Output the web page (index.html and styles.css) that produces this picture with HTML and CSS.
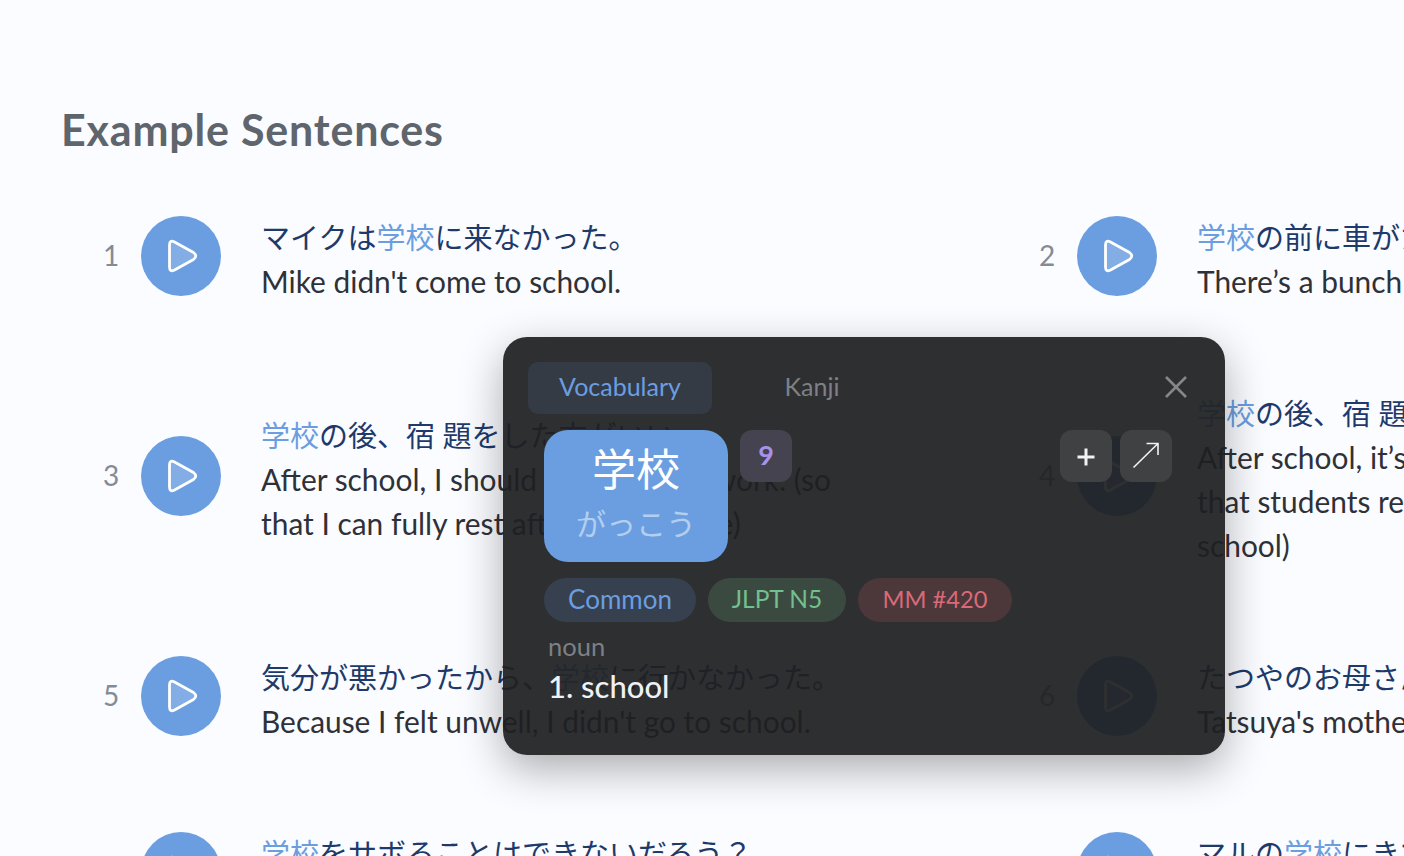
FILE: index.html
```html
<!DOCTYPE html>
<html lang="en">
<head>
    <meta charset="UTF-8">
    <meta name="viewport" content="width=device-width, initial-scale=1.0">
    <title>Example Sentences</title>
    <link rel="stylesheet" href="styles.css">
</head>
<body>
    <svg class="defs" width="0" height="0">
        <symbol id="play" viewBox="0 0 80 80">
            <path d="M28.500 29q0-5.500 5-3l19 10.500q4.500 3.500 0 7l-19 10.500q-5 2.500-5-3z" fill="rgba(255,255,255,.16)" stroke="#fff" stroke-width="2.800" stroke-linejoin="round"/>
        </symbol>
    </svg>

    <section class="sentences">
        <h2>Example Sentences</h2>
        <div class="sentence-grid">
            <div class="sentence">
                <span class="num">1</span>
                <button class="play"><svg><use href="#play"/></svg></button>
                <div class="text">
                    <p class="ja">マイクは<em>学校</em>に来なかった。</p>
                    <p class="en">Mike didn't come to school.</p>
                </div>
            </div>
            <div class="sentence">
                <span class="num">2</span>
                <button class="play"><svg><use href="#play"/></svg></button>
                <div class="text">
                    <p class="ja"><em>学校</em>の前に車がたくさんあります。</p>
                    <p class="en">There’s a bunch of cars in front of the school.</p>
                </div>
            </div>
            <div class="sentence">
                <span class="num">3</span>
                <button class="play"><svg><use href="#play"/></svg></button>
                <div class="text">
                    <p class="ja"><em>学校</em>の後、宿 題をした方がいい。</p>
                    <p class="en">After school, I should tackle all my work. (so that I can fully rest after that at ease)</p>
                </div>
            </div>
            <div class="sentence">
                <span class="num">4</span>
                <button class="play"><svg><use href="#play"/></svg></button>
                <div class="text">
                    <p class="ja"><em>学校</em>の後、宿 題をするのは大事です。</p>
                    <p class="en">After school, it’s good to do homework so that students review what they learned at school)</p>
                </div>
            </div>
            <div class="sentence">
                <span class="num">5</span>
                <button class="play"><svg><use href="#play"/></svg></button>
                <div class="text">
                    <p class="ja">気分が悪かったから、<em>学校</em>に行かなかった。</p>
                    <p class="en">Because I felt unwell, I didn't go to school.</p>
                </div>
            </div>
            <div class="sentence">
                <span class="num">6</span>
                <button class="play"><svg><use href="#play"/></svg></button>
                <div class="text">
                    <p class="ja">たつやのお母さんは先生です。</p>
                    <p class="en">Tatsuya's mother is a school teacher.</p>
                </div>
            </div>
            <div class="sentence">
                <span class="num">7</span>
                <button class="play"><svg><use href="#play"/></svg></button>
                <div class="text">
                    <p class="ja"><em>学校</em>をサボることはできないだろう？</p>
                    <p class="en">You can't skip school, can you?</p>
                </div>
            </div>
            <div class="sentence">
                <span class="num">8</span>
                <button class="play"><svg><use href="#play"/></svg></button>
                <div class="text">
                    <p class="ja">マルの<em>学校</em>にきてください。</p>
                    <p class="en">Please come to Maru's school.</p>
                </div>
            </div>
        </div>
    </section>

    <div class="popup">
        <div class="tabs">
            <button class="tab active">Vocabulary</button>
            <button class="tab">Kanji</button>
            <button class="close">
                <svg width="24" height="24" viewBox="0 0 24 24"><path d="M2 2l20 20M22 2L2 22" stroke="#85878c" stroke-width="2.600" fill="none"/></svg>
            </button>
        </div>
        <div class="popup-body">
            <div class="head">
                <div class="word">
                    <span class="kanji">学校</span>
                    <span class="reading">がっこう</span>
                </div>
                <span class="strokes">9</span>
                <div class="actions">
                    <button class="action plus">
                        <svg width="24" height="24" viewBox="0 0 24 24"><path d="M12 3.500v17M3.500 12h17" stroke="#f1f2f4" stroke-width="3" fill="none"/></svg>
                    </button>
                    <button class="action">
                        <svg width="28" height="28" viewBox="0 0 28 28"><path d="M1.500 25.500L26 1.500M14.500 1.500H26V13" stroke="#f1f2f4" stroke-width="1.600" fill="none"/></svg>
                    </button>
                </div>
            </div>
            <div class="tags">
                <span class="tag blue">Common</span>
                <span class="tag green">JLPT N5</span>
                <span class="tag red">MM #420</span>
            </div>
            <div class="pos">noun</div>
            <div class="meaning">1. school</div>
        </div>
    </div>
</body>
</html>
```

FILE: styles.css
```css
html, body {
    height: 100%;
}
body {
    margin: 0;
    background-color: #fbfcff;
    font-family: Lato, "Noto Sans CJK JP", sans-serif;
    overflow: hidden;
    position: relative;
}
button {
    font-family: inherit;
    border: none;
    padding: 0;
    background: none;
}
.defs {
    position: absolute;
}
.sentences {
    padding: 106px 0 0 61px;
}
.sentences h2 {
    margin: 0;
    font-size: 43px;
    line-height: 48px;
    font-weight: 700;
    letter-spacing: .8px;
    color: #5f656d;
}
.sentence-grid {
    display: grid;
    grid-template-columns: 936px 936px;
    row-gap: 80px;
    margin: 54px 0 0 35px;
}
.sentence {
    display: flex;
    align-items: center;
}
.num {
    width: 30px;
    margin-right: 15px;
    padding-bottom: 2px;
    text-align: center;
    font-size: 28px;
    color: #858b94;
}
.play {
    flex: none;
    width: 80px;
    height: 80px;
    border-radius: 50%;
    background-color: #6a9ee0;
}
.play svg {
    display: block;
    width: 80px;
    height: 80px;
}
.text {
    width: 590px;
    margin-left: 40px;
    padding-top: 8px;
}
.text p {
    margin: 0;
    line-height: 44px;
}
.text .en {
    margin: -1px 0 1px;
    font-size: 29.900px;
    color: #2e3238;
}
.ja {
    font-size: 29px;
    color: #1d3a6b;
}
.ja em {
    font-style: normal;
    color: #6a9ee0;
}

.popup {
    position: absolute;
    left: 503px;
    top: 337px;
    width: 722px;
    height: 418px;
    box-sizing: border-box;
    padding: 25px;
    border-radius: 24px;
    background-color: rgba(30, 31, 33, .93);
    box-shadow: 0 14px 44px rgba(0, 0, 0, .32);
}
.tabs {
    display: flex;
    align-items: center;
    gap: 8px;
}
.tab {
    width: 184px;
    height: 52px;
    padding-bottom: 4px;
    border-radius: 10px;
    font-size: 25px;
    color: #7d8086;
}
.tab.active {
    background-color: #343b45;
    color: #6a9ee0;
}
.close {
    margin: -2px 12px 0 auto;
    width: 24px;
    height: 24px;
}
.close svg, .action svg {
    display: block;
}
.popup-body {
    padding: 16px 16px 0;
}
.head {
    display: flex;
    align-items: flex-start;
    gap: 12px;
}
.word {
    width: 184px;
    height: 132px;
    box-sizing: border-box;
    padding-top: 10px;
    border-radius: 24px;
    background-color: #6a9ee0;
    text-align: center;
}
.kanji {
    display: block;
    font-size: 44px;
    line-height: 58px;
    color: #fff;
}
.reading {
    display: block;
    margin-top: 2px;
    font-size: 30px;
    line-height: 46px;
    color: rgba(255, 255, 255, .5);
}
.strokes {
    width: 52px;
    height: 52px;
    border-radius: 12px;
    background-color: #45434f;
    color: #a892e8;
    font-size: 27px;
    font-weight: 700;
    line-height: 50px;
    text-align: center;
}
.actions {
    display: flex;
    gap: 8px;
    margin-left: auto;
    margin-right: 12px;
}
.action {
    display: flex;
    align-items: center;
    justify-content: center;
    width: 52px;
    height: 52px;
    border-radius: 12px;
    background-color: #3f4142;
}
.action.plus {
    padding-top: 2px;
}
.tags {
    display: flex;
    gap: 12px;
    margin-top: 16px;
}
.tag {
    height: 44px;
    border-radius: 22px;
    line-height: 42px;
    text-align: center;
}
.tag.blue {
    width: 152px;
    font-size: 26px;
    background-color: #36404e;
    color: #6a9ee0;
}
.tag.green {
    width: 138px;
    font-size: 24.500px;
    background-color: #3b4a40;
    color: #72c08e;
}
.tag.red {
    width: 154px;
    font-size: 23.700px;
    background-color: #4c383b;
    color: #d96a78;
}
.pos {
    margin: 10px 0 0 4px;
    font-size: 25.500px;
    line-height: 28px;
    color: #7d8086;
}
.meaning {
    margin: 6px 0 0 4px;
    font-size: 31px;
    line-height: 40px;
    font-weight: 500;
    color: #f0f1f5;
}
```
